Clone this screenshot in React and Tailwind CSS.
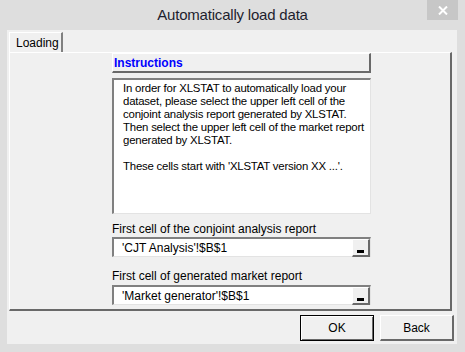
const font = { fontFamily: '"Liberation Sans", Arial, sans-serif' };

const BrowseButton = () => (
  <div className="w-[18px] h-[18px] bg-[#f0f0f0] border-t border-l border-white border-r-2 border-b-2 border-r-[#696969] border-b-[#696969] flex items-end justify-center pb-[2px]">
    <div className="w-[7px] h-[3px] bg-black" />
  </div>
);

const CellInput = ({ value }) => (
  <div className="h-[20px] w-[259px] bg-white border-t-2 border-l-2 border-t-[#808080] border-l-[#808080] border-r border-b border-r-[#e3e3e3] border-b-[#e3e3e3] flex items-start justify-between">
    <span className="pl-[8px] pt-[2px] text-[12px] leading-[14px] text-black">{value}</span>
    <BrowseButton />
  </div>
);

export default function App() {
  return (
    <div className="w-[465px] h-[352px] bg-[#dedede] relative overflow-hidden" style={font}>
      {/* title bar */}
      <div className="h-[30px] flex items-center justify-center">
        <span className="text-[15px] text-[#1e1e2e] tracking-[-0.2px]">Automatically load data</span>
      </div>
      <div className="absolute top-0 left-[427px] w-[31px] h-[20px] bg-[#c7c7c7] flex items-center justify-center">
        <svg width="10" height="9" viewBox="0 0 10 9">
          <path d="M1 0.5 L9 8.5 M9 0.5 L1 8.5" stroke="white" strokeWidth="2" />
        </svg>
      </div>

      {/* client area */}
      <div className="ml-[7px] w-[450px] h-[314px] bg-[#f0f0f0] pt-[2px] pl-[2px]">
        {/* tab */}
        <div className="w-[54px] h-[20px] border-t border-l border-white border-r-2 border-r-[#808080] flex items-center pl-[6px] text-[12px] text-black">
          Loading
        </div>
        {/* panel */}
        <div className="w-[443px] h-[259px] border-t border-l border-white border-r-2 border-b-2 border-r-[#696969] border-b-[#696969] pl-[102px]">
          <div className="w-[259px] flex flex-col">
            <div className="h-[20px] border-t border-l border-white border-r-2 border-b-2 border-r-[#696969] border-b-[#696969] bg-[#f0f0f0] flex items-center pl-[1px]">
              <span className="text-[12px] font-bold text-[#0000ff]">Instructions</span>
            </div>
            <div className="mt-[5px] h-[136px] bg-white border-t-2 border-l-2 border-t-[#808080] border-l-[#808080] border-r border-b border-r-[#e3e3e3] border-b-[#e3e3e3] pl-[9px] pt-[2px] text-[11.4px] leading-[13px] text-black tracking-[-0.2px] whitespace-nowrap overflow-hidden">
              <p>
                In order for XLSTAT to automatically load your<br />
                dataset, please select the upper left cell of the<br />
                conjoint analysis report generated by XLSTAT.<br />
                Then select the upper left cell of the market report<br />
                generated by XLSTAT.
              </p>
              <p className="mt-[13px]">These cells start with 'XLSTAT version XX ...'.</p>
            </div>
            <div className="mt-[7px] h-[16px] text-[12px] leading-[16px] text-black">First cell of the conjoint analysis report</div>
            <CellInput value="'CJT Analysis'!$B$1" />
            <div className="mt-[11px] h-[17px] text-[12px] leading-[17px] text-black">First cell of generated market report</div>
            <CellInput value="'Market generator'!$B$1" />
          </div>
        </div>
        {/* buttons */}
        <div className="flex justify-end gap-[6px] pr-[3px] mt-[4px]">
          <button className="w-[74px] h-[26px] border border-black bg-[#f0f0f0] text-[12px] text-black flex items-center justify-center shadow-[inset_1px_1px_0_white,inset_-1px_-1px_0_#696969]">
            OK
          </button>
          <button className="w-[74px] h-[26px] bg-[#f0f0f0] text-[12px] text-black flex items-center justify-center border-t border-l border-white border-r-2 border-b-2 border-r-[#696969] border-b-[#696969]">
            Back
          </button>
        </div>
      </div>
    </div>
  );
}
